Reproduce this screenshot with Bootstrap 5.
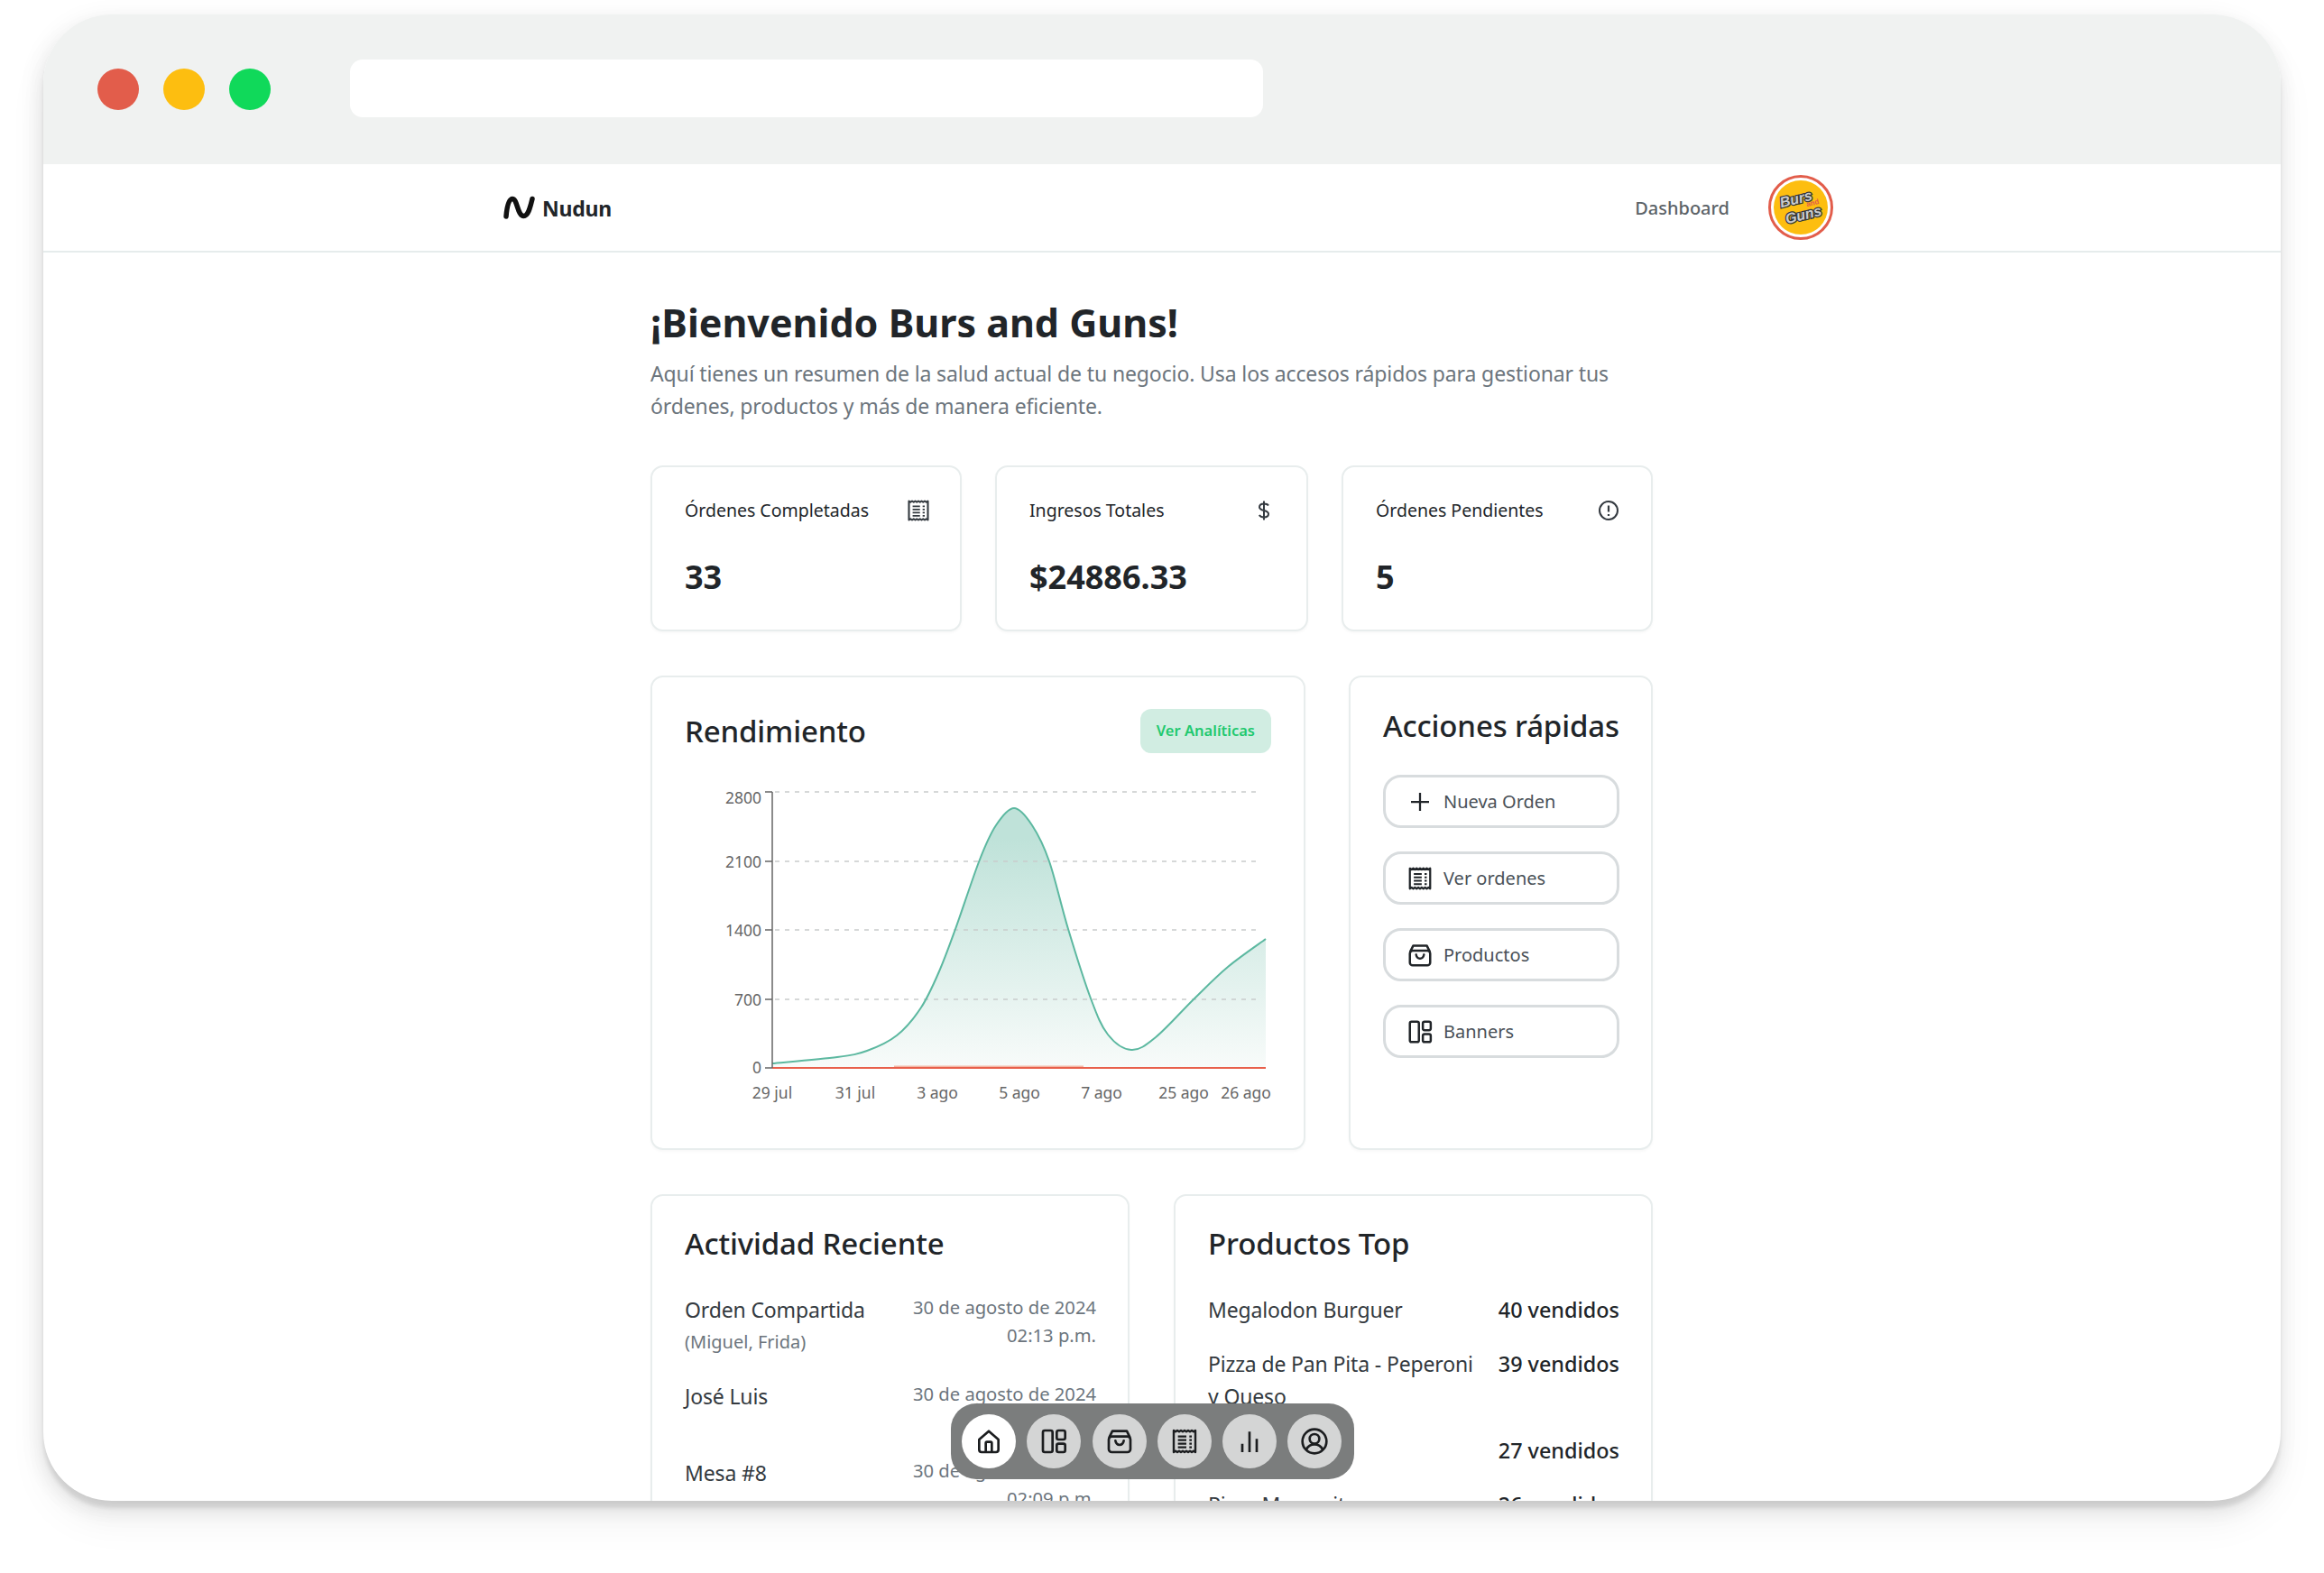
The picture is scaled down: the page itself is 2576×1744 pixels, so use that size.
<!DOCTYPE html>
<html lang="es">
<head>
  <meta charset="utf-8">
  <meta name="viewport" content="width=device-width, initial-scale=1">
  <title>Nudun - Dashboard</title>
  <link href="https://cdn.jsdelivr.net/npm/bootstrap@5.3.3/dist/css/bootstrap.min.css" rel="stylesheet">
  <script src="https://cdn.jsdelivr.net/npm/bootstrap@5.3.3/dist/js/bootstrap.bundle.min.js" defer></script>
  <style>
    html, body { height: 1744px; overflow: hidden; background: #fff; }
    body { font-family: "Noto Sans", sans-serif; color: #212529; padding: 16px 0 0 48px; }
    .mock-window {
      position: relative; width: 2480px; height: 1648px; overflow: hidden;
      border-radius: 76px; background: #fff;
      box-shadow: 0 8px 4px rgba(0,0,0,.09), 0 14px 22px rgba(0,0,0,.05), 0 24px 44px rgba(0,0,0,.05), -4px 4px 28px rgba(0,0,0,.06);
    }
    .title-bar { height: 166px; background: #f0f2f1; padding: 60px 0 0 60px; gap: 27px; }
    .light { width: 46px; height: 46px; border-radius: 50%; }
    .address-bar { width: 1012px; height: 64px; margin: -10px 0 0 61px; background: #fff; border-radius: 14px; }
    .top-nav { height: 98px; border-bottom: 2px solid #e6ecec; padding-left: 510px; }
    .top-nav-inner { width: 1474px; }
    .brand-name { font-size: 23px; font-weight: 700; color: #212529; margin: 2px 0 0 8px; letter-spacing: -.2px; }
    .nav-dash { font-size: 20px; font-weight: 500; color: #5c6368; margin: 2px 43px 0 0; }
    .page-main { width: 1111px; margin-left: 673px; padding-top: 49px; }
    .page-title { font-size: 43px; font-weight: 700; line-height: 58px; margin: 0 0 9px; }
    .page-sub { font-size: 23px; letter-spacing: -.12px; line-height: 36px; color: #6c757d; margin: 0 0 48px; width: 1100px; }
    .box-card { border: 2px solid #e8eded; border-radius: 14px; box-shadow: 0 2px 3px rgba(0,0,0,.03); padding: 35px 35px 35px 36px; }
    .stat-grid { display: grid; grid-template-columns: 345px 347px 345px; gap: 37px; margin-bottom: 49px; }
    .stat-card { height: 184px; }
    .stat-label { font-size: 19.5px; line-height: 26px; color: #212529; }
    .stat-icon { width: 24px; height: 24px; color: #343a40; }
    .stat-icon-wide { width: 28px; height: 28px; margin: -2px -3px -2px 0; color: #343a40; }
    .stat-value { font-size: 36px; font-weight: 700; line-height: 48px; margin-top: 37px; color: #212529; }
    .perf-grid { display: grid; grid-template-columns: 726px 337px; gap: 48px; margin-bottom: 49px; }
    .perf-card { height: 526px; }
    .block-title { font-size: 33px; letter-spacing: -.15px; font-weight: 500; line-height: 46px; margin: 0; color: #212529; }
    .btn-analytics { background: #d1ede2; color: #1fc96f; font-size: 16.5px; font-weight: 600; border: 0; border-radius: 12px; height: 49px; padding: 0 18px; margin-right: 1px; }
    .perf-chart { display: block; margin-top: 35px; }
    .perf-chart text { font-family: "Noto Sans", sans-serif; font-size: 17.5px; fill: #666; }
    .quick-title { margin: -4px 0 31px; white-space: nowrap; }
    .quick-btn { height: 59px; border: 3px solid #d8dcde; border-radius: 20px; background: #fff; color: #495057; font-size: 20px; padding: 0 0 0 23px; gap: 11px; margin-bottom: 26px; }
    .quick-btn svg { width: 30px; height: 30px; color: #212529; flex: none; }
    .bottom-grid { display: grid; grid-template-columns: 531px 531px; gap: 49px; }
    .list-card { height: 500px; }
    .list-title { margin: -5px 0 32px; }
    .row-name { font-size: 23px; letter-spacing: -.15px; line-height: 36px; color: #343a40; }
    .row-note { font-size: 20px; line-height: 36px; color: #6c757d; }
    .row-date { font-size: 20.2px; line-height: 31px; color: #6c757d; text-align: right; flex: none; width: 225px; }
    .act-row { min-height: 96px; }
    .act-row.short { min-height: 85px; }
    .row-sold { font-size: 23.4px; line-height: 36px; font-weight: 500; color: #212529; white-space: nowrap; flex: none; }
    .top-row { margin-bottom: 24px; gap: 26px; }
    .float-dock { position: absolute; left: 1006px; top: 1540px; width: 447px; height: 84px; border-radius: 28px; background: #7b7d7d; gap: 12.3px; padding: 0 12px; }
    .dock-btn { width: 60px; height: 60px; border-radius: 50%; background: #d4d5d5; color: #1b1d1f; flex: none; }
    .dock-btn.active { background: #fff; }
    .dock-btn svg { width: 32px; height: 32px; }
    .av-text { font-family: "Liberation Sans", sans-serif; font-weight: 700; font-style: italic; font-size: 16px; fill: #c9cbcd; stroke: #33363a; stroke-width: 2.5px; paint-order: stroke; }
    .av-and { font-family: "Liberation Sans", sans-serif; font-weight: 700; font-size: 8px; fill: #e25d4b; }
  </style>
</head>
<body>
  <svg width="0" height="0" class="position-absolute">
    <symbol id="i-home" viewBox="0 0 24 24"><path d="M4 10.500 12 3.500l8 7V19a2 2 0 0 1-2 2H6a2 2 0 0 1-2-2z M9.500 21v-7.500a1 1 0 0 1 1-1h3a1 1 0 0 1 1 1V21" fill="none" stroke="currentColor" stroke-width="2" stroke-linejoin="round"/></symbol>
    <symbol id="i-layout" viewBox="0 0 24 24"><g fill="none" stroke="currentColor" stroke-width="2"><rect x="3" y="3" width="8" height="18" rx="1.500"/><rect x="14.500" y="3" width="7" height="7.500" rx="1.500"/><rect x="14.500" y="14" width="7" height="7" rx="1.500"/></g></symbol>
    <symbol id="i-bag" viewBox="0 0 24 24"><g fill="none" stroke="currentColor" stroke-width="2" stroke-linecap="round" stroke-linejoin="round"><path d="M3.500 8.500 6 3.500h12l2.500 5"/><rect x="3" y="8" width="18" height="13" rx="2.500"/><path d="M8.500 11.500c.5 2.500 2 3.500 3.500 3.500s3-1 3.500-3.500"/></g></symbol>
    <symbol id="i-receipt" viewBox="0 0 24 24"><path d="M3 3l1.500 1 1.500-1 1.500 1 1.500-1 1.500 1 1.500-1 1.500 1 1.500-1 1.500 1 1.500-1 1.500 1L21 3v18l-1.500-1-1.500 1-1.500-1-1.500 1-1.500-1-1.500 1-1.500-1-1.500 1-1.500-1-1.500 1-1.500-1L3 21z" fill="none" stroke="currentColor" stroke-width="1.800" stroke-linejoin="round"/><path d="M6.500 8h7M6.500 11h7M6.500 14h7M6.500 17h7M16 8h2M16 11h2M16 14h2M16 17h2" stroke="currentColor" stroke-width="1.600"/></symbol>
    <symbol id="i-bars" viewBox="0 0 24 24"><path d="M6 21v-7M12 21V4M18 21v-11" fill="none" stroke="currentColor" stroke-width="2"/></symbol>
    <symbol id="i-user" viewBox="0 0 24 24"><g fill="none" stroke="currentColor" stroke-width="2"><circle cx="12" cy="12" r="10"/><circle cx="12" cy="10" r="4"/><path d="M5 19c1.500-3 4-4.500 7-4.500s5.500 1.500 7 4.500"/></g></symbol>
  </svg>

  <div class="mock-window">
    <div class="title-bar d-flex">
      <div class="light" style="background:#e25d4b"></div>
      <div class="light" style="background:#fdbe10"></div>
      <div class="light" style="background:#10d95a"></div>
      <div class="address-bar"></div>
    </div>

    <nav class="top-nav d-flex align-items-center">
      <div class="top-nav-inner d-flex align-items-center justify-content-between">
        <a class="d-flex align-items-center text-decoration-none" href="#">
          <svg width="35" height="28" viewBox="0 0 35 28"><path d="M3 24C4 12 6 4.500 10 4.500c5.500 0 5.500 19 12.500 19 5 0 7-9 9.500-19" fill="none" stroke="#111" stroke-width="5.500" stroke-linecap="round"/></svg>
          <span class="brand-name">Nudun</span>
        </a>
        <div class="d-flex align-items-center">
          <a class="nav-dash text-decoration-none" href="#">Dashboard</a>
          <svg width="72" height="72" viewBox="0 0 72 72">
            <circle cx="36" cy="36" r="34.500" fill="#fff" stroke="#e25d4b" stroke-width="3"/>
            <circle cx="36" cy="36" r="30" fill="#fdbe10"/>
            <g transform="rotate(-14 36 36)">
              <text class="av-text" x="33" y="31" text-anchor="middle">Burs</text>
              <text class="av-and" x="50" y="37" text-anchor="middle">and</text>
              <text class="av-text" x="37" y="50" text-anchor="middle">Guns</text>
            </g>
          </svg>
        </div>
      </div>
    </nav>

    <main class="page-main">
      <h1 class="page-title">¡Bienvenido Burs and Guns!</h1>
      <p class="page-sub">Aquí tienes un resumen de la salud actual de tu negocio. Usa los accesos rápidos para gestionar tus órdenes, productos y más de manera eficiente.</p>

      <div class="stat-grid">
        <div class="card box-card stat-card">
          <div class="d-flex justify-content-between align-items-center">
            <span class="stat-label">Órdenes Completadas</span>
            <svg class="stat-icon-wide"><use href="#i-receipt"/></svg>
          </div>
          <div class="stat-value">33</div>
        </div>
        <div class="card box-card stat-card">
          <div class="d-flex justify-content-between align-items-center">
            <span class="stat-label">Ingresos Totales</span>
            <svg class="stat-icon" viewBox="0 0 24 24"><path d="M17 6.500C16 5 14 4.500 12 4.500c-2.800 0-5 1.300-5 3.700 0 5 10 2.600 10 7.600 0 2.400-2.200 3.700-5 3.700-2.300 0-4.200-.8-5.200-2.500M12 1.500v21" fill="none" stroke="currentColor" stroke-width="2"/></svg>
          </div>
          <div class="stat-value">$24886.33</div>
        </div>
        <div class="card box-card stat-card">
          <div class="d-flex justify-content-between align-items-center">
            <span class="stat-label">Órdenes Pendientes</span>
            <svg class="stat-icon" viewBox="0 0 24 24"><circle cx="12" cy="12" r="10" fill="none" stroke="currentColor" stroke-width="2"/><path d="M12 6.500v7M12 16v2" stroke="currentColor" stroke-width="2.200"/></svg>
          </div>
          <div class="stat-value">5</div>
        </div>
      </div>

      <div class="perf-grid">
        <div class="card box-card perf-card">
          <div class="d-flex justify-content-between align-items-center">
            <h2 class="block-title">Rendimiento</h2>
            <button class="btn-analytics" type="button">Ver Analíticas</button>
          </div>
          <svg class="perf-chart" width="652" height="360" viewBox="758 870 652 360">
            <defs>
              <linearGradient id="areaFill" gradientUnits="userSpaceOnUse" x1="0" y1="930" x2="0" y2="1184">
                <stop offset="0" stop-color="#bfe2d9"/>
                <stop offset="1" stop-color="#f8fbfa"/>
              </linearGradient>
            </defs>
            <path id="chartArea" fill="url(#areaFill)"/>
            <g stroke="#c9cccc" stroke-width="1.500" stroke-dasharray="5 6">
              <path d="M858 878H1396M858 955H1396M858 1031H1396M858 1108H1396"/>
            </g>
            <path id="chartLine" fill="none" stroke="#5cb8a0" stroke-width="2"/>
            <path d="M990 1182.500H1200" stroke="#f3b7a6" stroke-width="2"/>
            <path d="M855 1184H1402" stroke="#e8604c" stroke-width="2"/>
            <path d="M855 878V1184M847 878H855M847 955H855M847 1031H855M847 1108H855M847 1184H855" fill="none" stroke="#666" stroke-width="1.500"/>
            <g text-anchor="end">
              <text x="843" y="891">2800</text>
              <text x="843" y="962">2100</text>
              <text x="843" y="1038">1400</text>
              <text x="843" y="1115">700</text>
              <text x="843" y="1190">0</text>
            </g>
            <g text-anchor="middle">
              <text x="855" y="1218">29 jul</text>
              <text x="947" y="1218">31 jul</text>
              <text x="1038" y="1218">3 ago</text>
              <text x="1129" y="1218">5 ago</text>
              <text x="1220" y="1218">7 ago</text>
              <text x="1311" y="1218">25 ago</text>
              <text x="1380" y="1218">26 ago</text>
            </g>
          </svg>
        </div>

        <div class="card box-card perf-card">
          <h2 class="block-title quick-title">Acciones rápidas</h2>
          <a class="quick-btn d-flex align-items-center text-decoration-none" href="#">
            <svg viewBox="0 0 24 24"><path d="M12 4v16M4 12h16" stroke="currentColor" stroke-width="1.800" fill="none"/></svg>Nueva Orden
          </a>
          <a class="quick-btn d-flex align-items-center text-decoration-none" href="#"><svg><use href="#i-receipt"/></svg>Ver ordenes</a>
          <a class="quick-btn d-flex align-items-center text-decoration-none" href="#"><svg><use href="#i-bag"/></svg>Productos</a>
          <a class="quick-btn d-flex align-items-center text-decoration-none" href="#"><svg><use href="#i-layout"/></svg>Banners</a>
        </div>
      </div>

      <div class="bottom-grid">
        <div class="card box-card list-card">
          <h2 class="block-title list-title">Actividad Reciente</h2>
          <div class="act-row d-flex justify-content-between">
            <div><div class="row-name">Orden Compartida</div><div class="row-note">(Miguel, Frida)</div></div>
            <div class="row-date">30 de agosto de 2024<br>02:13 p.m.</div>
          </div>
          <div class="act-row short d-flex justify-content-between">
            <div class="row-name">José Luis</div>
            <div class="row-date">30 de agosto de 2024<br>02:11 p.m.</div>
          </div>
          <div class="act-row short d-flex justify-content-between">
            <div class="row-name">Mesa #8</div>
            <div class="row-date">30 de agosto de 2024<br>02:09 p.m.</div>
          </div>
        </div>
        <div class="card box-card list-card">
          <h2 class="block-title list-title">Productos Top</h2>
          <div class="top-row d-flex justify-content-between"><div class="row-name">Megalodon Burguer</div><div class="row-sold">40 vendidos</div></div>
          <div class="top-row d-flex justify-content-between"><div class="row-name">Pizza de Pan Pita - Peperoni y Queso</div><div class="row-sold">39 vendidos</div></div>
          <div class="top-row d-flex justify-content-between"><div class="row-name">Burguer Doble</div><div class="row-sold">27 vendidos</div></div>
          <div class="top-row d-flex justify-content-between"><div class="row-name">Pizza Margarita</div><div class="row-sold">26 vendidos</div></div>
        </div>
      </div>
    </main>

    <div class="float-dock d-flex align-items-center">
      <a class="dock-btn active d-flex align-items-center justify-content-center" href="#"><svg><use href="#i-home"/></svg></a>
      <a class="dock-btn d-flex align-items-center justify-content-center" href="#"><svg><use href="#i-layout"/></svg></a>
      <a class="dock-btn d-flex align-items-center justify-content-center" href="#"><svg><use href="#i-bag"/></svg></a>
      <a class="dock-btn d-flex align-items-center justify-content-center" href="#"><svg><use href="#i-receipt"/></svg></a>
      <a class="dock-btn d-flex align-items-center justify-content-center" href="#"><svg><use href="#i-bars"/></svg></a>
      <a class="dock-btn d-flex align-items-center justify-content-center" href="#"><svg><use href="#i-user"/></svg></a>
    </div>
  </div>

  <script>
    // curva del grafico
    const pts = [[855,1179],[927,1172],[960,1165],[993,1148],[1020,1117],[1040,1077],[1058,1030],[1085,953],[1103,915],[1123,896],[1143,915],[1162,955],[1183,1030],[1208,1107],[1227,1147],[1253,1164],[1280,1150],[1323,1107],[1360,1072],[1402,1041]];
    let d = "M" + pts[0].join(" ");
    for (let i = 0; i < pts.length - 1; i++) {
      const p0 = pts[i - 1] || pts[i], p1 = pts[i], p2 = pts[i + 1], p3 = pts[i + 2] || p2;
      d += " C" + (p1[0] + (p2[0] - p0[0]) / 6) + " " + (p1[1] + (p2[1] - p0[1]) / 6) + " " +
        (p2[0] - (p3[0] - p1[0]) / 6) + " " + (p2[1] - (p3[1] - p1[1]) / 6) + " " + p2[0] + " " + p2[1];
    }
    document.getElementById("chartLine").setAttribute("d", d);
    document.getElementById("chartArea").setAttribute("d", d + " L1402 1184 L855 1184 Z");
  </script>
</body>
</html>
